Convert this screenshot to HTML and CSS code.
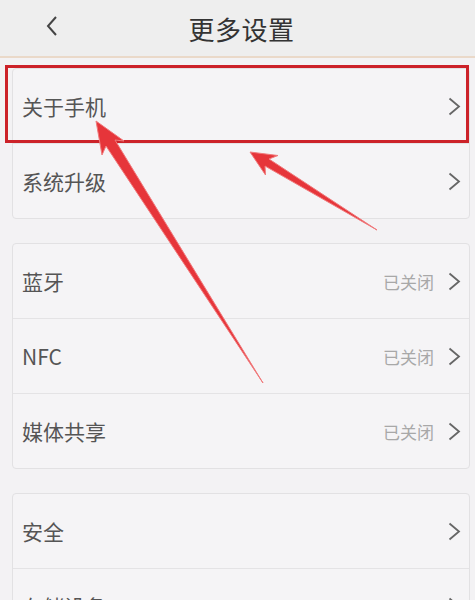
FILE: index.html
```html
<!DOCTYPE html>
<html lang="zh-CN">
<head>
    <meta charset="UTF-8">
    <meta name="viewport" content="width=device-width, initial-scale=1.0">
    <title>更多设置</title>
    <link rel="stylesheet" href="styles.css">
</head>
<body>
    <div class="page">
        <div class="header">
            <svg class="back" width="14" height="22" viewBox="0 0 14 22">
                <polyline points="11,2 3,11 11,20" fill="none" stroke="#444" stroke-width="2"/>
            </svg>
            <div class="title">更多设置</div>
        </div>

        <div class="content">
            <div class="card">
                <div class="row"><span class="label">关于手机</span><span class="right"><svg class="chev" width="13" height="19" viewBox="0 0 13 19"><polyline points="1.5,1.5 11,9.5 1.5,17.5" fill="none" stroke="#666" stroke-width="1.8"/></svg></span></div>
                <div class="row"><span class="label">系统升级</span><span class="right"><svg class="chev" width="13" height="19" viewBox="0 0 13 19"><polyline points="1.5,1.5 11,9.5 1.5,17.5" fill="none" stroke="#666" stroke-width="1.8"/></svg></span></div>
            </div>

            <div class="card">
                <div class="row"><span class="label">蓝牙</span><span class="right"><span class="state">已关闭</span><svg class="chev" width="13" height="19" viewBox="0 0 13 19"><polyline points="1.5,1.5 11,9.5 1.5,17.5" fill="none" stroke="#666" stroke-width="1.8"/></svg></span></div>
                <div class="row"><span class="label">NFC</span><span class="right"><span class="state">已关闭</span><svg class="chev" width="13" height="19" viewBox="0 0 13 19"><polyline points="1.5,1.5 11,9.5 1.5,17.5" fill="none" stroke="#666" stroke-width="1.8"/></svg></span></div>
                <div class="row"><span class="label">媒体共享</span><span class="right"><span class="state">已关闭</span><svg class="chev" width="13" height="19" viewBox="0 0 13 19"><polyline points="1.5,1.5 11,9.5 1.5,17.5" fill="none" stroke="#666" stroke-width="1.8"/></svg></span></div>
            </div>

            <div class="card">
                <div class="row"><span class="label">安全</span><span class="right"><svg class="chev" width="13" height="19" viewBox="0 0 13 19"><polyline points="1.5,1.5 11,9.5 1.5,17.5" fill="none" stroke="#666" stroke-width="1.8"/></svg></span></div>
                <div class="row"><span class="label">存储设备</span><span class="right"><svg class="chev" width="13" height="19" viewBox="0 0 13 19"><polyline points="1.5,1.5 11,9.5 1.5,17.5" fill="none" stroke="#666" stroke-width="1.8"/></svg></span></div>
            </div>
        </div>

        <!-- annotation drawn over the screenshot -->
        <div class="highlight"></div>
        <svg class="arrows" width="475" height="600" viewBox="0 0 475 600">
            <polygon points="96,121 102,155 106,146 263,383 115,140 124,141" fill="#e6353a" stroke="#f07a7c" stroke-width="1" stroke-linejoin="round"/>
            <polygon points="250,152 265.5,175 265,166 377,230 269,159 278,155.5" fill="#e6353a" stroke="#f07a7c" stroke-width="1" stroke-linejoin="round"/>
        </svg>
    </div>
</body>
</html>
```

FILE: styles.css
```css
body {
    margin: 0;
    padding: 0;
    font-family: "Noto Sans CJK SC", "Noto Sans", sans-serif;
    background-color: #f3f2f4;
    color: #555;
}

.page {
    position: relative;
    width: 475px;
    height: 600px;
    overflow: hidden;
}

.header {
    height: 56px;
    background-color: #eeeeee;
    border-bottom: 2px solid #ead9c9;
    display: flex;
    align-items: center;
    justify-content: center;
    position: relative;
}

.back {
    position: absolute;
    left: 45px;
    top: 15px;
}

.title {
    font-size: 26px;
    color: #333;
    letter-spacing: 0.5px;
    margin-left: 8px;
}

.content {
    padding: 10px 5px 0 12px;
    display: flex;
    flex-direction: column;
    gap: 24px;
}

.card {
    background-color: #f5f4f6;
    border: 1px solid #e2e1e3;
    border-radius: 4px;
}

.row {
    height: 74px;
    display: flex;
    align-items: center;
    justify-content: space-between;
    padding: 0 8px 0 9px;
    border-top: 1px solid #e4e3e5;
}

.row:first-child {
    border-top: none;
}

.label {
    font-size: 21px;
    color: #555;
}

.right {
    display: flex;
    align-items: center;
    gap: 14px;
}

.state {
    font-size: 17px;
    color: #a8a8a8;
}

.highlight {
    position: absolute;
    left: 5px;
    top: 65px;
    width: 458px;
    height: 72px;
    border: 3px solid #cc2229;
}

.arrows {
    position: absolute;
    left: 0;
    top: 0;
}
```
